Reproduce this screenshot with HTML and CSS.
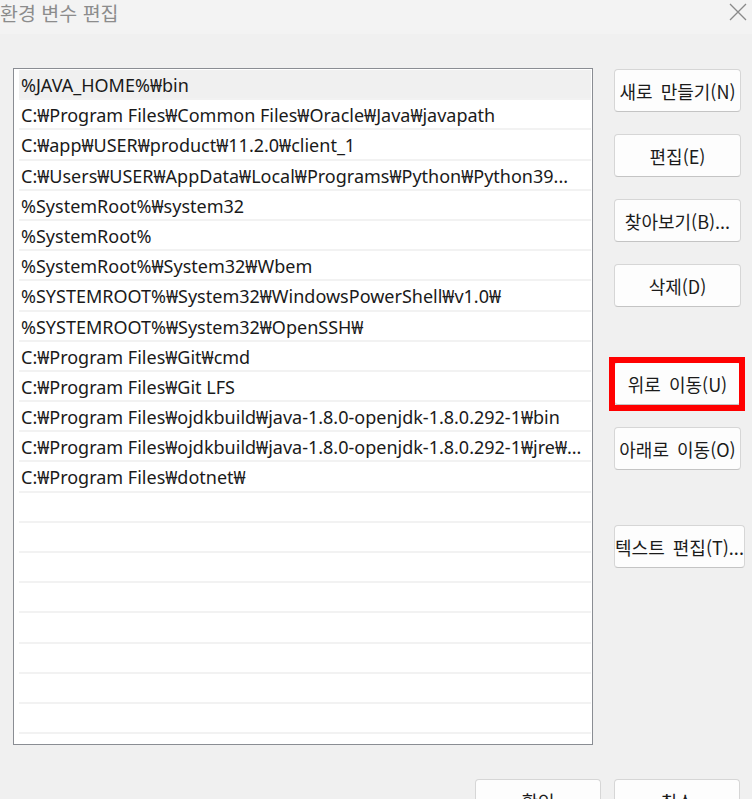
FILE: index.html
```html
<!DOCTYPE html>
<html lang="ko">
<head>
<meta charset="utf-8">
<title>환경 변수 편집</title>
<link rel="stylesheet" href="styles.css">
</head>
<body>
<div class="window">
  <div class="titlebar">
    <span class="title">환경 변수 편집</span>
    <svg class="close" width="18" height="18" viewBox="0 0 18 18" aria-hidden="true">
      <path d="M1 1 L17 17 M17 1 L1 17" stroke="#8a8a8a" stroke-width="1.3" fill="none"/>
    </svg>
  </div>
  <div class="content">
    <div class="list">
      <div class="row selected">%JAVA_HOME%₩bin</div>
      <div class="row">C:₩Program Files₩Common Files₩Oracle₩Java₩javapath</div>
      <div class="row">C:₩app₩USER₩product₩11.2.0₩client_1</div>
      <div class="row">C:₩Users₩USER₩AppData₩Local₩Programs₩Python₩Python39...</div>
      <div class="row">%SystemRoot%₩system32</div>
      <div class="row">%SystemRoot%</div>
      <div class="row">%SystemRoot%₩System32₩Wbem</div>
      <div class="row">%SYSTEMROOT%₩System32₩WindowsPowerShell₩v1.0₩</div>
      <div class="row">%SYSTEMROOT%₩System32₩OpenSSH₩</div>
      <div class="row">C:₩Program Files₩Git₩cmd</div>
      <div class="row">C:₩Program Files₩Git LFS</div>
      <div class="row">C:₩Program Files₩ojdkbuild₩java-1.8.0-openjdk-1.8.0.292-1₩bin</div>
      <div class="row">C:₩Program Files₩ojdkbuild₩java-1.8.0-openjdk-1.8.0.292-1₩jre₩...</div>
      <div class="row">C:₩Program Files₩dotnet₩</div>
      <div class="row"></div>
      <div class="row"></div>
      <div class="row"></div>
      <div class="row"></div>
      <div class="row"></div>
      <div class="row"></div>
      <div class="row"></div>
      <div class="row"></div>
      <div class="row"></div>
      <div class="row"></div>
    </div>
    <div class="side">
      <button class="btn">새로 만들기(N)</button>
      <button class="btn">편집(E)</button>
      <button class="btn">찾아보기(B)...</button>
      <button class="btn">삭제(D)</button>
      <button class="btn gap-lg highlight">위로 이동(U)</button>
      <button class="btn">아래로 이동(O)</button>
      <button class="btn gap-lg wide">텍스트 편집(T)...</button>
    </div>
  </div>
  <div class="footer">
    <button class="btn">확인</button>
    <button class="btn">취소</button>
  </div>
</div>
</body>
</html>
```

FILE: styles.css
```css
html, body {
  margin: 0;
  padding: 0;
}
body {
  width: 752px;
  height: 799px;
  overflow: hidden;
  background: #f0f0f0;
  font-family: "Noto Sans", "Noto Sans CJK KR", sans-serif;
  color: #1a1a1a;
}
.window {
  width: 752px;
  height: 799px;
  display: flex;
  flex-direction: column;
}
.titlebar {
  height: 34px;
  background: #f3f3f3;
  display: flex;
  align-items: flex-start;
  justify-content: space-between;
  flex-shrink: 0;
}
.title {
  font-family: "Noto Sans CJK KR", sans-serif;
  font-size: 19.5px;
  line-height: 26px;
  color: #8c8c8c;
}
.close {
  margin-top: 3px;
  margin-right: 5px;
}
.content {
  display: flex;
  align-items: flex-start;
  height: 711px;
  flex-shrink: 0;
}
.list {
  margin-top: 34px;
  margin-left: 13px;
  width: 572px;
  height: 670px;
  padding: 1px 1px 4px 5px;
  border: 1px solid #8a8d93;
  background: #ffffff;
  overflow: hidden;
}
.row {
  height: 28.2px;
  line-height: 30px;
  padding-left: 2px;
  border-bottom: 2px solid #f2f2f2;
  font-size: 18px;
  white-space: nowrap;
  overflow: hidden;
}
.row.selected {
  background: #f0f0f0;
}
.side {
  margin-left: 21px;
  padding-top: 35px;
  display: flex;
  flex-direction: column;
  align-items: flex-start;
  gap: 22px;
}
.btn {
  position: relative;
  width: 127px;
  height: 43px;
  padding: 0;
  background: #fdfdfd;
  border: 1px solid #d6d6d6;
  border-bottom-color: #c4c4c4;
  border-radius: 4px;
  font-family: "Noto Sans CJK KR", "Noto Sans", sans-serif;
  font-size: 18px;
  word-spacing: 3px;
  color: #1b1b1b;
  white-space: nowrap;
  overflow: hidden;
}
.btn.gap-lg {
  margin-top: 33px;
}
.btn.wide {
  width: 131px;
}
.btn.highlight {
  overflow: visible;
}
.btn.highlight::after {
  content: "";
  position: absolute;
  top: -6px;
  left: -6px;
  right: -5px;
  bottom: -7px;
  border: 6px solid #ff0000;
}
.footer {
  display: flex;
  justify-content: flex-end;
  gap: 13px;
  padding-top: 34px;
  padding-right: 12px;
}
.footer .btn {
  width: 126px;
}
```
